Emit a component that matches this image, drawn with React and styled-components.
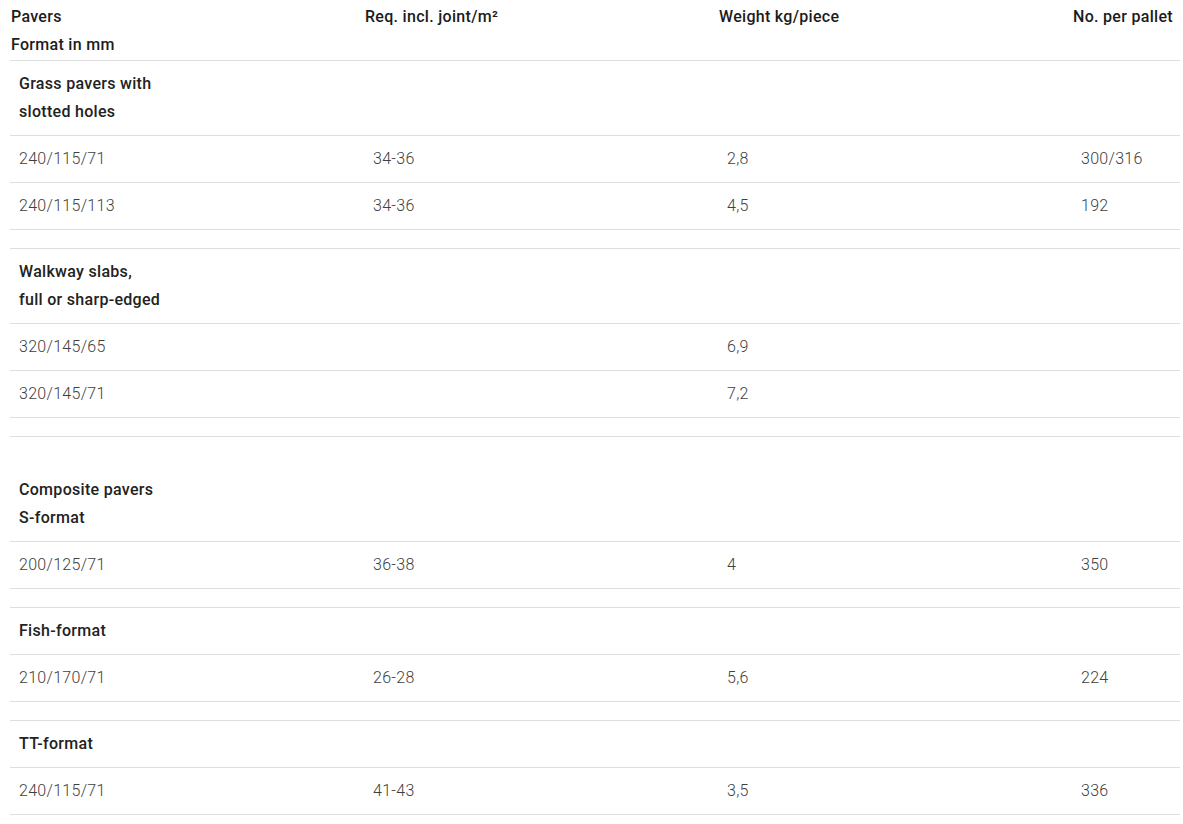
import styled, { createGlobalStyle } from "styled-components";

const GlobalStyle = createGlobalStyle`
  body {
    margin: 0;
    background: #fff;
    font-family: Roboto, "Noto Sans", "Liberation Sans", sans-serif;
  }
`;

// data of the pavers table
const columns = ["Req. incl. joint/m²", "Weight kg/piece", "No. per pallet"];

const groups = [
  {
    title: ["Grass pavers with", "slotted holes"],
    rows: [
      ["240/115/71", "34-36", "2,8", "300/316"],
      ["240/115/113", "34-36", "4,5", "192"],
    ],
  },
  {
    title: ["Walkway slabs,", "full or sharp-edged"],
    rows: [
      ["320/145/65", "", "6,9", ""],
      ["320/145/71", "", "7,2", ""],
    ],
  },
  {
    title: ["Composite pavers", "S-format"],
    lead: true,
    rows: [["200/125/71", "36-38", "4", "350"]],
  },
  {
    title: ["Fish-format"],
    rows: [["210/170/71", "26-28", "5,6", "224"]],
  },
  {
    title: ["TT-format"],
    rows: [["240/115/71", "41-43", "3,5", "336"]],
  },
];

const Page = styled.div`
  padding: 2px 3px 0 10px;
`;

const Table = styled.table`
  width: 1170px;
  border-collapse: collapse;
  table-layout: fixed;
  font-size: 16px;
  line-height: 28px;
  letter-spacing: 0.3px;
`;

const Col = styled.col`
  width: ${(p) => p.$w}px;
`;

const Row = styled.tr`
  border-bottom: 1px solid #dedede;
`;

const HeadCell = styled.th`
  padding: 1px 0 1px 1px;
  text-align: left;
  vertical-align: top;
  font-weight: 500;
  color: #1c1c1c;
`;

const TitleCell = styled.td`
  padding: ${(p) => (p.$lead ? "39px" : "9px")} 8px 9px 9px;
  font-weight: 500;
  color: #222;
`;

const Cell = styled.td`
  padding: 9px 8px 9px 9px;
  font-weight: 300;
  color: #404040;
  white-space: nowrap;
`;

const SpacerCell = styled.td`
  padding: 9px 0;
`;

export default function App() {
  return (
    <Page>
      <GlobalStyle />
      <Table>
        <colgroup>
          <Col $w={354} />
          <Col $w={354} />
          <Col $w={354} />
          <Col $w={108} />
        </colgroup>
        <thead>
          <Row>
            <HeadCell>
              Pavers
              <br />
              Format in mm
            </HeadCell>
            {columns.map((c) => (
              <HeadCell key={c}>{c}</HeadCell>
            ))}
          </Row>
        </thead>
        <tbody>
          {groups.map((g, gi) => (
            <GroupRows key={gi} group={g} last={gi === groups.length - 1} />
          ))}
        </tbody>
      </Table>
    </Page>
  );
}

function GroupRows({ group, last }) {
  return (
    <>
      <Row>
        <TitleCell $lead={group.lead}>
          {group.title.map((t, i) => (
            <span key={i}>
              {i > 0 && <br />}
              {t}
            </span>
          ))}
        </TitleCell>
        <TitleCell $lead={group.lead} />
        <TitleCell $lead={group.lead} />
        <TitleCell $lead={group.lead} />
      </Row>
      {group.rows.map((r, ri) => (
        <Row key={ri}>
          {r.map((v, ci) => (
            <Cell key={ci}>{v}</Cell>
          ))}
        </Row>
      ))}
      {!last && (
        <Row>
          <SpacerCell colSpan={4} />
        </Row>
      )}
    </>
  );
}
